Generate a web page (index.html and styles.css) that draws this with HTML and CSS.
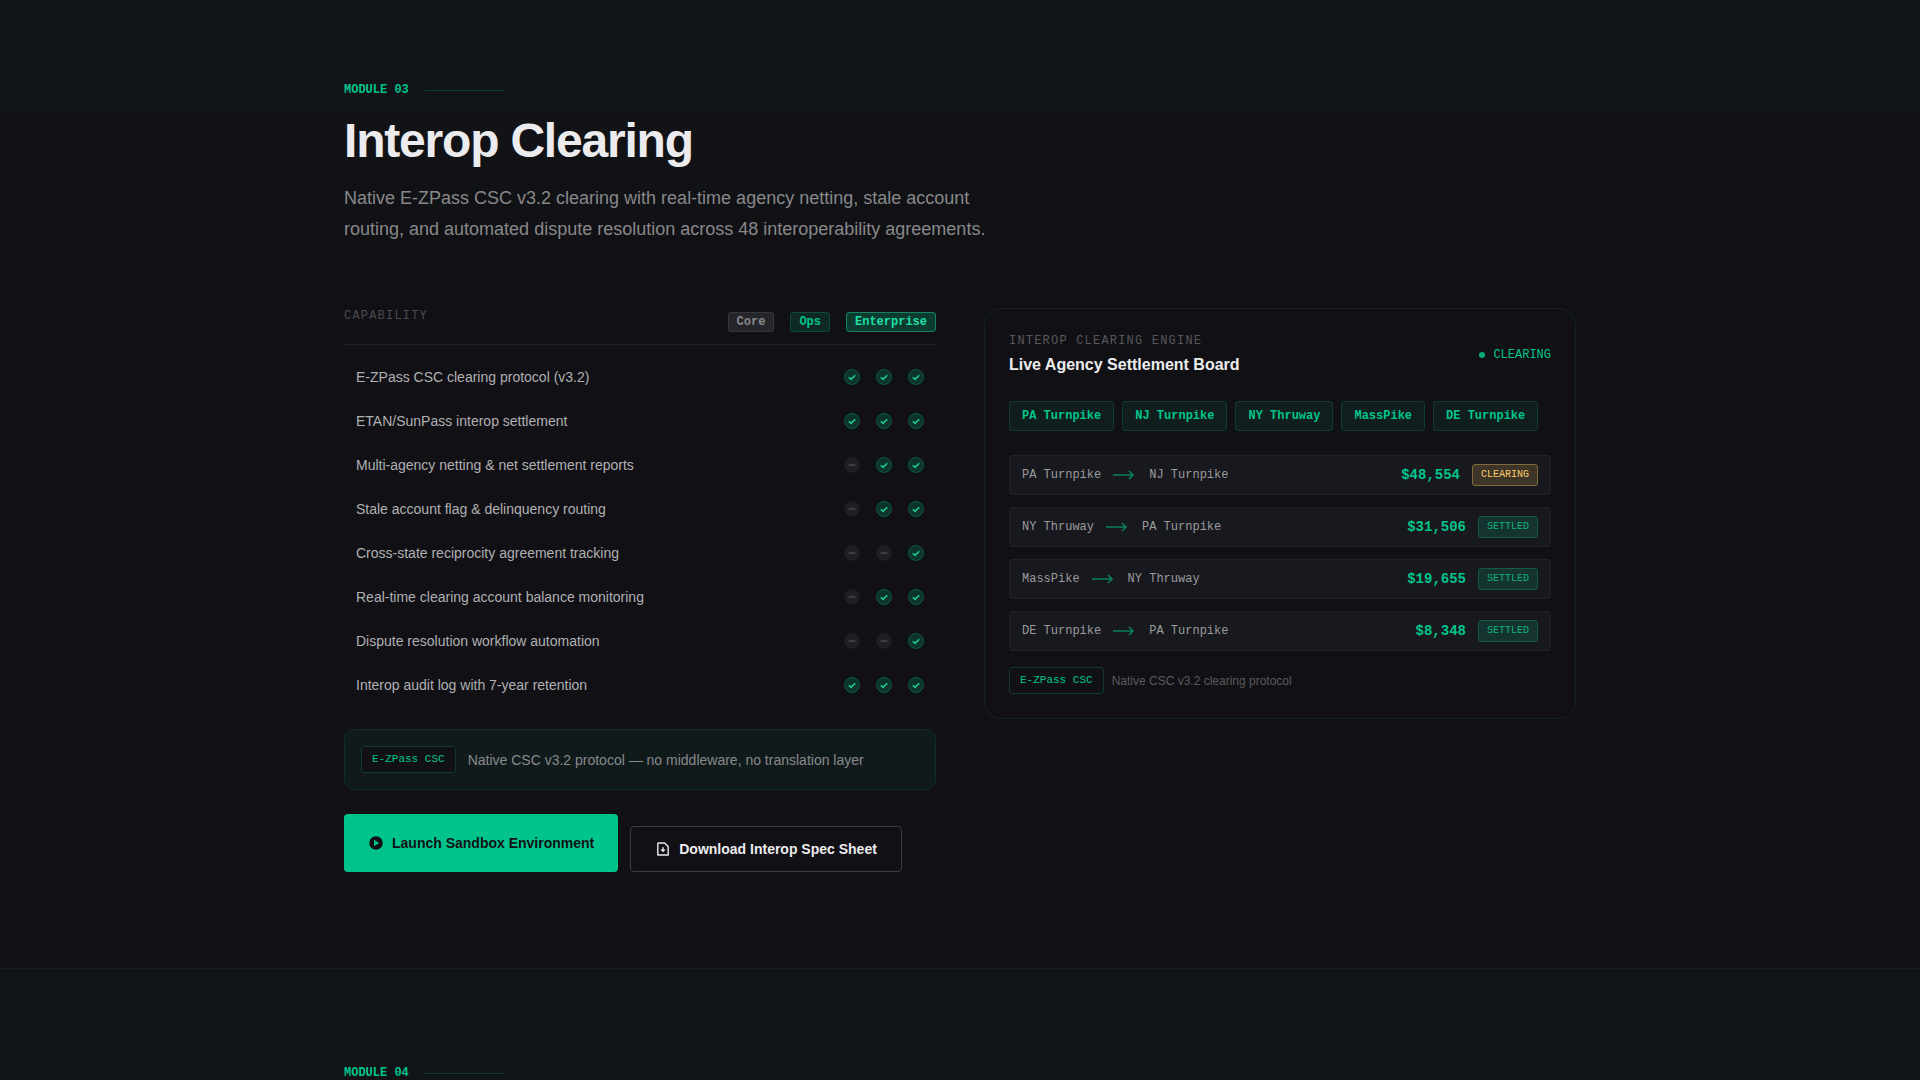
FILE: index.html
```
<!DOCTYPE html>
<html lang="en">
<head>
    <meta charset="UTF-8">
    <meta name="viewport" content="width=device-width, initial-scale=1.0">
    <title>Interop Clearing</title>
    <link rel="stylesheet" href="styles.css">
</head>
<body>
    <!-- Shared icons -->
    <svg class="sprite" aria-hidden="true">
        <symbol id="icon-check" viewBox="0 0 16 16">
            <circle cx="8" cy="8" r="7.5" fill="#00c48c" fill-opacity="0.2" stroke="#00c48c" stroke-opacity="0.35"/>
            <path d="M4.8 8.2l2.2 2.2 4.2-4.2" fill="none" stroke="#1fc997" stroke-width="1.6"/>
        </symbol>
        <symbol id="icon-dash" viewBox="0 0 16 16">
            <circle cx="8" cy="8" r="7.5" fill="#fff" fill-opacity="0.06" stroke="#fff" stroke-opacity="0.03"/>
            <path d="M4.5 8h7" stroke="#47474b" stroke-width="1.5"/>
        </symbol>
        <symbol id="icon-arrow" viewBox="0 0 24 12">
            <path d="M0 6h20M16 2l4 4-4 4" fill="none" stroke="#00c48c" stroke-opacity="0.6" stroke-width="1.5"/>
        </symbol>
    </svg>

    <section class="module module-first">
        <div class="container">
            <div class="eyebrow"><span>MODULE 03</span><span class="eyebrow-line"></span></div>
            <h2 class="module-title">Interop Clearing</h2>
            <p class="module-intro">Native E-ZPass CSC v3.2 clearing with real-time agency netting, stale account routing, and automated dispute resolution across 48 interoperability agreements.</p>

            <div class="columns">
                <div class="column">
                    <table class="capabilities">
                        <thead>
                            <tr>
                                <th class="label">CAPABILITY</th>
                                <th class="tier"><span class="tier-badge core">Core</span></th>
                                <th class="tier"><span class="tier-badge ops">Ops</span></th>
                                <th class="tier"><span class="tier-badge enterprise">Enterprise</span></th>
                            </tr>
                        </thead>
                        <tbody>
                            <tr>
                                <td class="name">E-ZPass CSC clearing protocol (v3.2)</td>
                                <td><svg class="mark"><use href="#icon-check"/></svg></td>
                                <td><svg class="mark"><use href="#icon-check"/></svg></td>
                                <td><svg class="mark"><use href="#icon-check"/></svg></td>
                            </tr>
                            <tr>
                                <td class="name">ETAN/SunPass interop settlement</td>
                                <td><svg class="mark"><use href="#icon-check"/></svg></td>
                                <td><svg class="mark"><use href="#icon-check"/></svg></td>
                                <td><svg class="mark"><use href="#icon-check"/></svg></td>
                            </tr>
                            <tr>
                                <td class="name">Multi-agency netting &amp; net settlement reports</td>
                                <td><svg class="mark"><use href="#icon-dash"/></svg></td>
                                <td><svg class="mark"><use href="#icon-check"/></svg></td>
                                <td><svg class="mark"><use href="#icon-check"/></svg></td>
                            </tr>
                            <tr>
                                <td class="name">Stale account flag &amp; delinquency routing</td>
                                <td><svg class="mark"><use href="#icon-dash"/></svg></td>
                                <td><svg class="mark"><use href="#icon-check"/></svg></td>
                                <td><svg class="mark"><use href="#icon-check"/></svg></td>
                            </tr>
                            <tr>
                                <td class="name">Cross-state reciprocity agreement tracking</td>
                                <td><svg class="mark"><use href="#icon-dash"/></svg></td>
                                <td><svg class="mark"><use href="#icon-dash"/></svg></td>
                                <td><svg class="mark"><use href="#icon-check"/></svg></td>
                            </tr>
                            <tr>
                                <td class="name">Real-time clearing account balance monitoring</td>
                                <td><svg class="mark"><use href="#icon-dash"/></svg></td>
                                <td><svg class="mark"><use href="#icon-check"/></svg></td>
                                <td><svg class="mark"><use href="#icon-check"/></svg></td>
                            </tr>
                            <tr>
                                <td class="name">Dispute resolution workflow automation</td>
                                <td><svg class="mark"><use href="#icon-dash"/></svg></td>
                                <td><svg class="mark"><use href="#icon-dash"/></svg></td>
                                <td><svg class="mark"><use href="#icon-check"/></svg></td>
                            </tr>
                            <tr>
                                <td class="name">Interop audit log with 7-year retention</td>
                                <td><svg class="mark"><use href="#icon-check"/></svg></td>
                                <td><svg class="mark"><use href="#icon-check"/></svg></td>
                                <td><svg class="mark"><use href="#icon-check"/></svg></td>
                            </tr>
                        </tbody>
                    </table>

                    <div class="note">
                        <span class="protocol-badge">E-ZPass CSC</span>
                        <span>Native CSC v3.2 protocol — no middleware, no translation layer</span>
                    </div>

                    <div class="actions">
                        <button type="button" class="btn btn-primary">
                            <svg width="16" height="16" viewBox="0 0 16 16" aria-hidden="true">
                                <path fill="currentColor" fill-rule="evenodd" d="M8 1.2a6.8 6.8 0 1 0 0 13.6A6.8 6.8 0 0 0 8 1.2zM6 4.7v6.6L11.2 8z"/>
                            </svg>
                            Launch Sandbox Environment
                        </button>
                        <button type="button" class="btn btn-secondary">
                            <svg width="16" height="16" viewBox="0 0 16 16" aria-hidden="true">
                                <path fill="none" stroke="currentColor" stroke-width="1.4" stroke-linejoin="round" d="M3.4 2h6.2l3.6 3.6V14H2.8V2.6z"/>
                                <path fill="currentColor" d="M7.3 6.2h1.4v2.2h2L8 11.3 5.3 8.4h2z"/>
                            </svg>
                            Download Interop Spec Sheet
                        </button>
                    </div>
                </div>

                <div class="column board">
                    <div class="board-header">
                        <div>
                            <div class="label">INTEROP CLEARING ENGINE</div>
                            <h3 class="board-title">Live Agency Settlement Board</h3>
                        </div>
                        <div class="live"><span class="live-dot"></span>CLEARING</div>
                    </div>

                    <div class="agencies">
                        <span class="agency">PA Turnpike</span>
                        <span class="agency">NJ Turnpike</span>
                        <span class="agency">NY Thruway</span>
                        <span class="agency">MassPike</span>
                        <span class="agency">DE Turnpike</span>
                    </div>

                    <div class="settlements">
                        <div class="settlement">
                            <span>PA Turnpike</span>
                            <svg class="arrow"><use href="#icon-arrow"/></svg>
                            <span>NJ Turnpike</span>
                            <span class="amount">$48,554</span>
                            <span class="status clearing">CLEARING</span>
                        </div>
                        <div class="settlement">
                            <span>NY Thruway</span>
                            <svg class="arrow"><use href="#icon-arrow"/></svg>
                            <span>PA Turnpike</span>
                            <span class="amount">$31,506</span>
                            <span class="status settled">SETTLED</span>
                        </div>
                        <div class="settlement">
                            <span>MassPike</span>
                            <svg class="arrow"><use href="#icon-arrow"/></svg>
                            <span>NY Thruway</span>
                            <span class="amount">$19,655</span>
                            <span class="status settled">SETTLED</span>
                        </div>
                        <div class="settlement">
                            <span>DE Turnpike</span>
                            <svg class="arrow"><use href="#icon-arrow"/></svg>
                            <span>PA Turnpike</span>
                            <span class="amount">$8,348</span>
                            <span class="status settled">SETTLED</span>
                        </div>
                    </div>

                    <div class="board-footer">
                        <span class="protocol-badge">E-ZPass CSC</span>
                        <span>Native CSC v3.2 clearing protocol</span>
                    </div>
                </div>
            </div>
        </div>
    </section>

    <section class="module">
        <div class="container">
            <div class="eyebrow"><span>MODULE 04</span><span class="eyebrow-line"></span></div>
        </div>
    </section>
</body>
</html>
```

FILE: styles.css
```
* {
    box-sizing: border-box;
}
body {
    margin: 0;
    background-color: #111115;
    color: #ececee;
    font-family: "Liberation Sans", Arial, sans-serif;
    font-size: 14px;
}
.sprite {
    display: none;
}
.module {
    padding: 96px 0;
    border-top: 1px solid #1a1e21;
    background: linear-gradient(180deg, #111519 0, #111115 240px);
}
.module-first {
    padding-top: 82px;
    border-top: none;
}
.container {
    max-width: 1280px;
    margin: 0 auto;
    padding: 0 24px;
}

/* Module heading */
.eyebrow {
    display: flex;
    align-items: center;
    gap: 16px;
    color: #00c48c;
    font-family: "Liberation Mono", monospace;
    font-size: 12px;
    font-weight: bold;
    line-height: 16px;
}
.eyebrow-line {
    width: 80px;
    height: 1px;
    background-color: #0d3c33;
}
.module-title {
    margin: 16px 0;
    font-size: 48px;
    line-height: 53px;
    letter-spacing: -0.025em;
}
.module-intro {
    max-width: 672px;
    margin: 0 0 64px;
    color: #88888a;
    font-size: 18px;
    line-height: 1.7;
}
.columns {
    display: grid;
    grid-template-columns: 1fr 1fr;
    gap: 48px;
    align-items: start;
}
.label {
    color: #4c4c4f;
    font-family: "Liberation Mono", monospace;
    font-size: 12px;
    font-weight: normal;
    line-height: 16px;
    letter-spacing: 0.1em;
    text-align: left;
}

/* Capability table */
.capabilities,
.capabilities thead,
.capabilities tbody {
    display: block;
}
.capabilities th,
.capabilities td {
    display: block;
    padding: 0;
}
.capabilities tr {
    display: flex;
    gap: 16px;
}
.capabilities thead tr {
    padding-bottom: 12px;
    border-bottom: 1px solid #222226;
}
.capabilities tbody {
    padding: 10px 0 22px;
}
.capabilities tbody tr {
    align-items: center;
    height: 44px;
    padding: 0 12px;
}
.capabilities th.label,
.capabilities .name {
    flex: 1;
}
.capabilities .name {
    color: #b0b0b2;
}
.capabilities .tier {
    padding-top: 4px;
}
.mark {
    display: block;
    width: 16px;
    height: 16px;
}
.tier-badge {
    display: block;
    padding: 2px 8px;
    border: 1px solid;
    border-radius: 3px;
    font-family: "Liberation Mono", monospace;
    font-size: 12px;
    line-height: 14px;
}
.core {
    background-color: #25262b;
    border-color: #37383d;
    color: #88898b;
}
.ops {
    background-color: #0e2923;
    border-color: #0c4a3a;
    color: #00c48c;
}
.enterprise {
    background-color: #0c3b30;
    border-color: #138363;
    color: #1fdfa5;
}

/* Protocol note */
.note {
    display: flex;
    align-items: center;
    gap: 12px;
    padding: 16px;
    border: 1px solid #0f2d29;
    border-radius: 10px;
    background-color: #111a1b;
    color: #88898b;
}
.protocol-badge {
    padding: 6px 10px;
    border: 1px solid #0e3a31;
    border-radius: 3px;
    background-color: #111115;
    color: #00c48c;
    font-family: "Liberation Mono", monospace;
    font-size: 11px;
    line-height: 13px;
}

/* Buttons */
.actions {
    display: flex;
    align-items: flex-end;
    gap: 12px;
    margin-top: 24px;
}
.btn {
    display: flex;
    align-items: center;
    gap: 8px;
    padding: 0 24px;
    border-radius: 4px;
    font-family: inherit;
    font-size: 14px;
    font-weight: bold;
    cursor: pointer;
}
.btn-primary {
    height: 58px;
    border: none;
    background-color: #00c48c;
    color: #111115;
}
.btn-secondary {
    height: 46px;
    border: 1px solid #3c3c40;
    background-color: transparent;
    color: #ececee;
}

/* Settlement board */
.board {
    padding: 24px;
    border: 1px solid #112423;
    border-radius: 16px;
}
.board-header {
    display: flex;
    justify-content: space-between;
    align-items: center;
    margin-bottom: 24px;
}
.board-title {
    margin: 4px 0 0;
    font-size: 16px;
    line-height: 24px;
}
.live {
    display: flex;
    align-items: center;
    gap: 8px;
    color: #00c48c;
    font-family: "Liberation Mono", monospace;
    font-size: 12px;
}
.live-dot {
    width: 6px;
    height: 6px;
    border-radius: 50%;
    background-color: #05a87a;
}
.board .label {
    color: #57575a;
}
.agencies {
    display: flex;
    flex-wrap: wrap;
    gap: 8px;
    margin-bottom: 24px;
}
.agency {
    padding: 7px 12px;
    border: 1px solid #0d3c33;
    border-radius: 3px;
    background-color: #101e1e;
    color: #00c48c;
    font-family: "Liberation Mono", monospace;
    font-size: 12px;
    font-weight: bold;
    line-height: 14px;
}
.settlements {
    display: flex;
    flex-direction: column;
    gap: 12px;
    margin-bottom: 16px;
}
.settlement {
    display: flex;
    align-items: center;
    gap: 12px;
    padding: 8px 12px;
    border: 1px solid #212226;
    border-radius: 3px;
    background-color: #18191e;
    color: #9b9b9d;
    font-family: "Liberation Mono", monospace;
    font-size: 12px;
}
.arrow {
    width: 24px;
    height: 12px;
}
.amount {
    margin-left: auto;
    color: #00c48c;
    font-size: 14px;
    font-weight: bold;
}
.status {
    padding: 4px 8px;
    border: 1px solid;
    border-radius: 3px;
    font-size: 10px;
    line-height: 12px;
}
.clearing {
    background-color: #3d3527;
    border-color: #82693a;
    color: #ffce6b;
}
.settled {
    background-color: #15342f;
    border-color: #125a44;
    color: #10b080;
}
.board-footer {
    display: flex;
    align-items: center;
    gap: 8px;
    color: #5b5b5e;
    font-size: 12px;
}
```
